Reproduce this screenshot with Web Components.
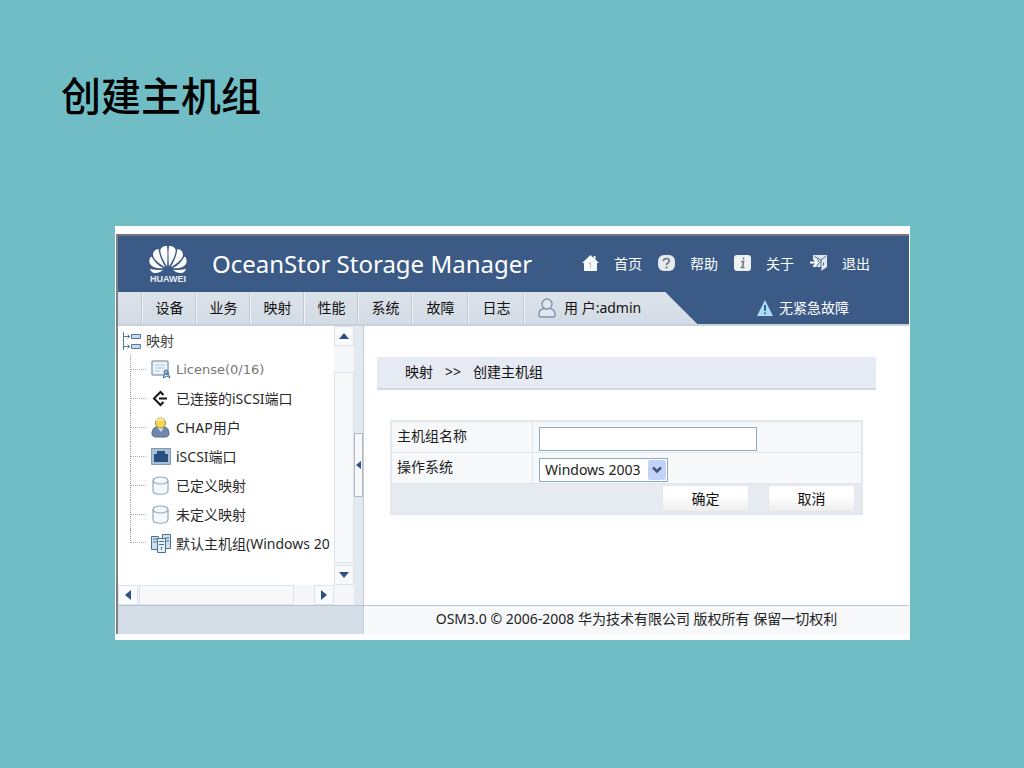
<!DOCTYPE html>
<html lang="zh-CN">
<head>
<meta charset="utf-8">
<title>创建主机组</title>
<style>
  body {
    margin: 0;
    min-height: 100vh;
    background: #71bdc5;
    color: #1c1c1c;
    font: 14px/20px "Noto Sans", "Noto Sans CJK SC", sans-serif;
  }
</style>
</head>
<body>
<x-slide>
  <span slot="title">创建主机组</span>
  <x-app></x-app>
</x-slide>

<template id="x-slide-template">
  <style>
    :host {
      display: block;
      padding: 66px 114px 128px 115px;
    }
    h1 {
      margin: 0 0 104px -54px;
      font: 500 40px/56px "Noto Sans CJK SC", sans-serif;
      color: #000;
    }
    .frame {
      background: #fdfefd;
      padding: 8px 1px 6px;
    }
  </style>
  <h1><slot name="title"></slot></h1>
  <div class="frame"><slot></slot></div>
</template>

<template id="x-app-template">
  <style>
    :host {
      display: block;
      border-left: 2px solid #7d8086;
      border-top: 2px solid #76747c;
    }
    .body {
      display: grid;
      grid-template-columns: 246px 1fr;
    }
  </style>
  <x-banner></x-banner>
  <x-navbar></x-navbar>
  <div class="body">
    <x-sidebar></x-sidebar>
    <x-content></x-content>
  </div>
  <x-footer>OSM3.0 © 2006-2008 华为技术有限公司 版权所有 保留一切权利</x-footer>
</template>

<template id="x-banner-template">
  <style>
    :host {
      display: flex;
      align-items: center;
      height: 56px;
      padding: 0 39px 0 30px;
      background: #3b5b86;
      color: #fff;
    }
    .title {
      flex: auto;
      margin-left: 24px;
      font-size: 24px;
      line-height: 32px;
      white-space: nowrap;
    }
    nav {
      display: flex;
      gap: 16px;
    }
  </style>
  <x-logo></x-logo>
  <span class="title">OceanStor Storage Manager</span>
  <nav>
    <x-banner-link label="首页">
      <svg width="17" height="18" viewBox="0 0 17 18"><path d="M8.5 0 0 8h2v8h13V8h2L13.500 4.500V1h-2v2z" fill="#f4f8f8"/><path d="M8.500 7.500v6M7 9l1.500-1.500" stroke="#d3b9bd" fill="none"/></svg>
    </x-banner-link>
    <x-banner-link label="帮助">
      <svg width="17" height="18" viewBox="0 0 17 18"><rect width="17" height="16" rx="6" fill="#e3e9ec"/><path d="M5.500 6C5.500 2.500 11.500 2.700 11.300 6 11.200 8 8.500 8 8.500 10M8.500 11.500v2" stroke="#66707a" stroke-width="1.600" fill="none"/></svg>
    </x-banner-link>
    <x-banner-link label="关于">
      <svg width="17" height="18" viewBox="0 0 17 18"><rect width="17" height="16" rx="3" fill="#edf1f2"/><path d="M9.500 2.500v2M7 6.500h2.500L8.500 12.500M6.500 12.500h4" stroke="#747c83" stroke-width="1.700" fill="none"/></svg>
    </x-banner-link>
    <x-banner-link label="退出">
      <svg width="17" height="18" viewBox="0 0 17 18"><path d="M3 0h14v12l-6 4v-4H3v-2h3V5H3z" fill="#dfe8ea"/><path d="M4.500 1.500 11 5v10M16 1l-5 4" stroke="#4d6a90" fill="none"/><path d="M0 7.500h7M4.500 4.500l3 3-3 3" stroke="#fff" stroke-width="1.800" fill="none"/><path d="M7.500 4.500 9.500 7.500l-3 4" stroke="#4d6a90" fill="none"/><path d="M13.500 7.500v3" stroke="#4d6a90"/></svg>
    </x-banner-link>
  </nav>
</template>

<template id="x-logo-template">
  <style>
    :host {
      display: flex;
      flex-direction: column;
      align-items: center;
      width: 40px;
    }
    svg { display: block; }
    span {
      font: bold 9px/10px "Liberation Sans", sans-serif;
      color: #e8eef4;
    }
  </style>
  <svg width="40" height="29" viewBox="0 0 40 29" fill="#fff">
    <g id="half">
      <path d="M19 21.500C15 15 11.600 8 12.500 4.500 13.200 1.700 16.500.500 19 1 19.700 6 19.600 14 19 21.500z"/>
      <path d="M17.300 22.200C11.500 19 5 14 5 9.500 5 6.500 7.500 4.300 10.500 4 11.200 9.500 13.500 16 17.300 22.200z"/>
      <path d="M15.500 23.200C9.500 24 2.500 22 1.500 17.500 1 15 1.700 12.500 3.500 11.500 6 16.500 10 20.500 15.500 23.200z"/>
      <path d="M15 25C11 28.500 6 29 3.500 26.500 3 26 2.200 24.800 2 23.700 6.500 25 11 25.300 15 25z"/>
    </g>
    <g transform="matrix(-1 0 0 1 40 0)">
      <path d="M19 21.500C15 15 11.600 8 12.500 4.500 13.200 1.700 16.500.500 19 1 19.700 6 19.600 14 19 21.500z"/>
      <path d="M17.300 22.200C11.500 19 5 14 5 9.500 5 6.500 7.500 4.300 10.500 4 11.200 9.500 13.500 16 17.300 22.200z"/>
      <path d="M15.500 23.200C9.500 24 2.500 22 1.500 17.500 1 15 1.700 12.500 3.500 11.500 6 16.500 10 20.500 15.500 23.200z"/>
      <path d="M15 25C11 28.500 6 29 3.500 26.500 3 26 2.200 24.800 2 23.700 6.500 25 11 25.300 15 25z"/>
    </g>
  </svg>
  <span>HUAWEI</span>
</template>

<template id="x-banner-link-template">
  <style>
    :host { display: block; }
    a {
      display: flex;
      align-items: center;
      gap: 15px;
      color: inherit;
      text-decoration: none;
      white-space: nowrap;
    }
    ::slotted(svg) { display: block; }
  </style>
  <a href="#"><slot></slot><span id="label"></span></a>
</template>

<template id="x-navbar-template">
  <style>
    :host {
      display: flex;
      justify-content: space-between;
      height: 32px;
      background: #3b5b86;
      border-bottom: 2px solid #c9d1dc;
    }
    nav {
      display: flex;
      padding: 0 56px 0 24px;
      background: linear-gradient(#dbe2ea, #d3dbe4);
      clip-path: polygon(0 0, calc(100% - 32px) 0, 100% 100%, 0 100%);
    }
    a, .user {
      display: flex;
      align-items: center;
      justify-content: center;
      box-sizing: border-box;
      width: 54px;
      border-left: 1px solid #f1f4f7;
      box-shadow: -1px 0 #bfc8d3;
      color: #111;
      text-decoration: none;
    }
    a.wide { width: 56px; }
    .user {
      width: auto;
      padding-left: 13px;
      gap: 8px;
      white-space: nowrap;
    }
    .alarm {
      display: flex;
      align-items: center;
      gap: 6px;
      padding-right: 60px;
      color: #fff;
    }
  </style>
  <nav>
    <a href="#">设备</a>
    <a href="#">业务</a>
    <a href="#">映射</a>
    <a href="#">性能</a>
    <a href="#">系统</a>
    <a href="#" class="wide">故障</a>
    <a href="#" class="wide">日志</a>
    <span class="user">
      <svg width="18" height="20" viewBox="0 0 18 20" fill="#dfe6ee" stroke="#7f95b0" stroke-width="1.400"><path d="M5.500 10.500C2 11.500.8 14 1 17c0 1.500 1 2 2 2h12c1 0 2-.5 2-2 .2-3-1-5.500-4.500-6.500z"/><circle cx="9" cy="6" r="5"/></svg>
      用 户:admin
    </span>
  </nav>
  <span class="alarm">
    <svg width="16" height="17" viewBox="0 0 16 17"><path d="M8 0 16 16H0z" fill="#a9dcf7"/><path d="M8 5v6M8 12.500V14" stroke="#214a70" stroke-width="1.600"/></svg>
    无紧急故障
  </span>
</template>

<template id="x-sidebar-template">
  <style>
    :host {
      display: grid;
      grid-template-columns: 216px 20px 10px;
      grid-template-rows: 1fr 20px;
      background: #fff;
    }
    .tree {
      overflow: hidden;
      height: 259px;
    }
    .root {
      display: flex;
      align-items: center;
      gap: 5px;
      height: 29px;
      padding-left: 4px;
      color: #444;
    }
    .corner { background: #f4f6f9; }
    .splitter {
      grid-column: 3;
      grid-row: 1 / 3;
      display: flex;
      flex-direction: column;
      background: #e4e9f0;
      border-right: 1px solid #c5ccda;
      padding-top: 107px;
    }
    .splitter button {
      display: flex;
      align-items: center;
      justify-content: center;
      width: 9px;
      height: 64px;
      padding: 0;
      background: #f6f8fa;
      border: 1px solid #b3bac4;
    }
    svg { flex: none; }
  </style>
  <div class="tree">
    <div class="root">
      <svg width="19" height="18" viewBox="0 0 19 18" fill="none" stroke="#55779c"><path d="M1.500 0v18M1.500 4.500H8M1.500 14.500H8M5.500 2.500l2 2-2 2M5.500 12.500l2 2-2 2"/><path d="M9.500 2.500h9v4h-9zM9.500 12.500h9v4h-9z" fill="#c5dbee"/></svg>
      映射
    </div>
    <x-tree-item muted>
      <svg slot="icon" width="20" height="19" viewBox="0 0 20 19"><rect x="1" y="1" width="16" height="14" rx="1" fill="#edf3f7" stroke="#8fa8bd" stroke-width="1.500"/><path d="M4 5h10M4 8h10M4 11h5" stroke="#b6c8d6"/><path d="m12 18 2-5 2 2 1-2 2 5-3-2z" fill="#dcecf8" stroke="#3e6c99"/><circle cx="15" cy="12" r="2" fill="#9dc0de" stroke="#3e6c99"/></svg>
      License(0/16)
    </x-tree-item>
    <x-tree-item>
      <svg slot="icon" width="20" height="19" viewBox="0 0 20 19" fill="none" stroke="#171717" stroke-width="2"><path d="m12.500 6-3-3L3 9.500 9.500 16l3-3M8 9.500h8"/></svg>
      已连接的iSCSI端口
    </x-tree-item>
    <x-tree-item>
      <svg slot="icon" width="20" height="21" viewBox="0 0 20 21"><path d="M5 10C2 11 1 14 1 17c0 2 2 3 4 3h9c2 0 4-1 4-3 0-3-1-6-4-7z" fill="#7089ab" stroke="#4f698d"/><path d="M6 10h7l-3 5z" fill="#d9e2ec"/><circle cx="9.500" cy="6" r="5" fill="#f8d750" stroke="#a98d40"/><path d="M6 4C7 2 11 1.500 12.500 4" stroke="#fff1a0" stroke-width="2" fill="none"/></svg>
      CHAP用户
    </x-tree-item>
    <x-tree-item>
      <svg slot="icon" width="20" height="17" viewBox="0 0 20 17"><path d="M.500.500h19v16H.500z" fill="#a9bdd3" stroke="#8299b5"/><path d="M3 14V6h3V3h8v3h3v8z" fill="#274f82"/></svg>
      iSCSI端口
    </x-tree-item>
    <x-tree-item>
      <svg slot="icon" width="20" height="19" viewBox="0 0 20 19" fill="#f4f8fb" stroke="#91a9bf" stroke-width="1.200"><path d="M2 4.500v10c0 5 15 5 15 0v-10"/><ellipse cx="9.500" cy="4.500" rx="7.500" ry="3.500"/></svg>
      已定义映射
    </x-tree-item>
    <x-tree-item>
      <svg slot="icon" width="20" height="19" viewBox="0 0 20 19" fill="#f4f8fb" stroke="#91a9bf" stroke-width="1.200"><path d="M2 4.500v10c0 5 15 5 15 0v-10"/><ellipse cx="9.500" cy="4.500" rx="7.500" ry="3.500"/></svg>
      未定义映射
    </x-tree-item>
    <x-tree-item last>
      <svg slot="icon" width="20" height="19" viewBox="0 0 20 19" fill="#cfe1ee" stroke="#4e7191"><path d="M.500 2.500h7v13h-7zM11.500.500h8v14h-8z"/><path d="M2 5h4M2 8h4M14 4h4M14 7h4"/><path d="M6.500 4.500h8v14h-8z" fill="#e4f0f7"/><path d="M8 7.500h5M8 10.500h5M10.500 13v3"/></svg>
      默认主机组(Windows 20
    </x-tree-item>
  </div>
  <x-scrollbar></x-scrollbar>
  <div class="splitter">
    <button aria-label="折叠"><svg width="5" height="8" viewBox="0 0 5 8"><path d="M5 0v8L0 4z" fill="#2f5084"/></svg></button>
  </div>
  <x-scrollbar horizontal></x-scrollbar>
  <div class="corner"></div>
</template>

<template id="x-tree-item-template">
  <style>
    :host {
      display: flex;
      align-items: center;
      height: 29px;
      padding-left: 12px;
      white-space: nowrap;
      color: #2a2a2a;
    }
    :host([muted]) {
      color: #777;
      font-family: "DejaVu Sans", sans-serif;
      font-size: 13px;
    }
    .rail {
      align-self: stretch;
      width: 15px;
      border-left: 1px dotted #999;
      background: linear-gradient(90deg, #aaa 50%, transparent 50%) 0 14px / 2px 1px repeat-x;
    }
    :host([last]) .rail {
      height: 14px;
      align-self: flex-start;
      background-position: 0 13px;
    }
    .icon {
      display: flex;
      justify-content: center;
      width: 20px;
      margin: 0 5px;
    }
  </style>
  <span class="rail"></span>
  <span class="icon"><slot name="icon"></slot></span>
  <slot></slot>
</template>

<template id="x-scrollbar-template">
  <style>
    :host {
      display: flex;
      flex-direction: column;
      background: #f4f6f9;
    }
    :host([horizontal]) { flex-direction: row; }
    button {
      display: flex;
      align-items: center;
      justify-content: center;
      flex: none;
      box-sizing: border-box;
      width: 20px;
      height: 20px;
      padding: 0;
      background: #f8fafb;
      border: 1px solid #dde2ea;
    }
    .thumb {
      flex: auto;
      box-sizing: border-box;
      margin: 26px 0 2px;
      background: #f6f8fa;
      border: 1px solid #dde2ea;
    }
    :host([horizontal]) .thumb { margin: 0 20px 0 1px; }
    svg { flex: none; transform: rotate(var(--turn)); }
    .back { --turn: 0deg; }
    .forward { --turn: 180deg; }
    :host([horizontal]) .back { --turn: -90deg; }
    :host([horizontal]) .forward { --turn: 90deg; }
  </style>
  <button class="back" aria-label="向前滚动"><svg width="10" height="6" viewBox="0 0 10 6"><path d="M0 6h10L5 0z" fill="#2f4f80"/></svg></button>
  <div class="thumb"></div>
  <button class="forward" aria-label="向后滚动"><svg width="10" height="6" viewBox="0 0 10 6"><path d="M0 6h10L5 0z" fill="#2f4f80"/></svg></button>
</template>

<template id="x-content-template">
  <style>
    :host {
      display: block;
      padding: 31px 33px 0 13px;
      background: #fff;
    }
    .crumbs {
      display: flex;
      gap: 12px;
      padding: 5px 28px 6px;
      background: #e6eaf2;
      border-bottom: 2px solid #d3d8e2;
      color: #111;
    }
    form {
      margin: 30px 13px 0;
      border: 2px solid #e3e8ee;
      background: #f6f8fa;
    }
    input, select {
      box-sizing: border-box;
      height: 24px;
      margin: 0;
      padding: 0 5px;
      background: #fff;
      border: 1px solid #8fa9c2;
      border-radius: 0;
      color: #222;
      font: inherit;
    }
    input { width: 218px; }
    select {
      appearance: none;
      width: 129px;
      line-height: 20px;
    }
    .actions {
      display: flex;
      justify-content: flex-end;
      gap: 19px;
      padding: 1px 6px 1px 0;
      background: #e6eaf1;
    }
    .actions button {
      width: 87px;
      height: 27px;
      padding: 0;
      border: 1px solid #e4e6ea;
      background: linear-gradient(#fff 40%, #eee);
      color: #111;
      font: inherit;
    }
  </style>
  <div class="crumbs"><span>映射</span><span>&gt;&gt;</span><span>创建主机组</span></div>
  <form>
    <x-field>
      <label slot="label" for="group-name">主机组名称</label>
      <input id="group-name" type="text">
    </x-field>
    <x-field>
      <label slot="label" for="os">操作系统</label>
      <x-dropdown>
        <select id="os"><option>Windows 2003</option></select>
      </x-dropdown>
    </x-field>
    <div class="actions">
      <button type="button">确定</button>
      <button type="button">取消</button>
    </div>
  </form>
</template>

<template id="x-field-template">
  <style>
    :host {
      display: grid;
      grid-template-columns: 141px 1fr;
      height: 30px;
      border-bottom: 1px solid #dfe5ec;
    }
    .label {
      padding: 4px 5px;
      border-right: 1px solid #dfe5ec;
    }
    .control { padding: 5px 6px 0; }
  </style>
  <div class="label"><slot name="label"></slot></div>
  <div class="control"><slot></slot></div>
</template>

<template id="x-dropdown-template">
  <style>
    :host {
      display: inline-grid;
      vertical-align: top;
    }
    ::slotted(select), svg { grid-area: 1 / 1; }
    svg {
      place-self: center end;
      margin-right: 2px;
      pointer-events: none;
      z-index: 1;
    }
  </style>
  <slot></slot>
  <svg width="18" height="20" viewBox="0 0 18 20"><rect width="18" height="20" rx="2" fill="#c3d2f8"/><path d="m5 7.500 4 4 4-4" fill="none" stroke="#40567f" stroke-width="2.500"/></svg>
</template>

<template id="x-footer-template">
  <style>
    :host {
      display: grid;
      grid-template-columns: 246px 1fr;
      border-top: 1px solid #b9c4cf;
      color: #222;
    }
    .side {
      background: #d5dde6;
      border-right: 1px solid #c5ccda;
    }
    .text {
      padding: 3px 0 5px;
      background: #f6f8fa;
      text-align: center;
    }
  </style>
  <div class="side"></div>
  <div class="text"><slot></slot></div>
</template>

<script>
  class TemplateElement extends HTMLElement {
    connectedCallback() {
      if (this.shadowRoot) return;
      const template = document.getElementById(this.nodeName.toLowerCase() + "-template");
      this.attachShadow({ mode: "open" }).appendChild(template.content.cloneNode(true));
      this.ready();
    }

    ready() {}
  }

  customElements.define("x-banner-link", class extends TemplateElement {
    ready() {
      this.shadowRoot.querySelector("#label").textContent = this.getAttribute("label");
    }
  });

  [
    "x-slide", "x-app", "x-banner", "x-logo", "x-navbar", "x-sidebar", "x-tree-item",
    "x-scrollbar", "x-content", "x-field", "x-dropdown", "x-footer",
  ].forEach((name) => customElements.define(name, class extends TemplateElement {}));
</script>
</body>
</html>
